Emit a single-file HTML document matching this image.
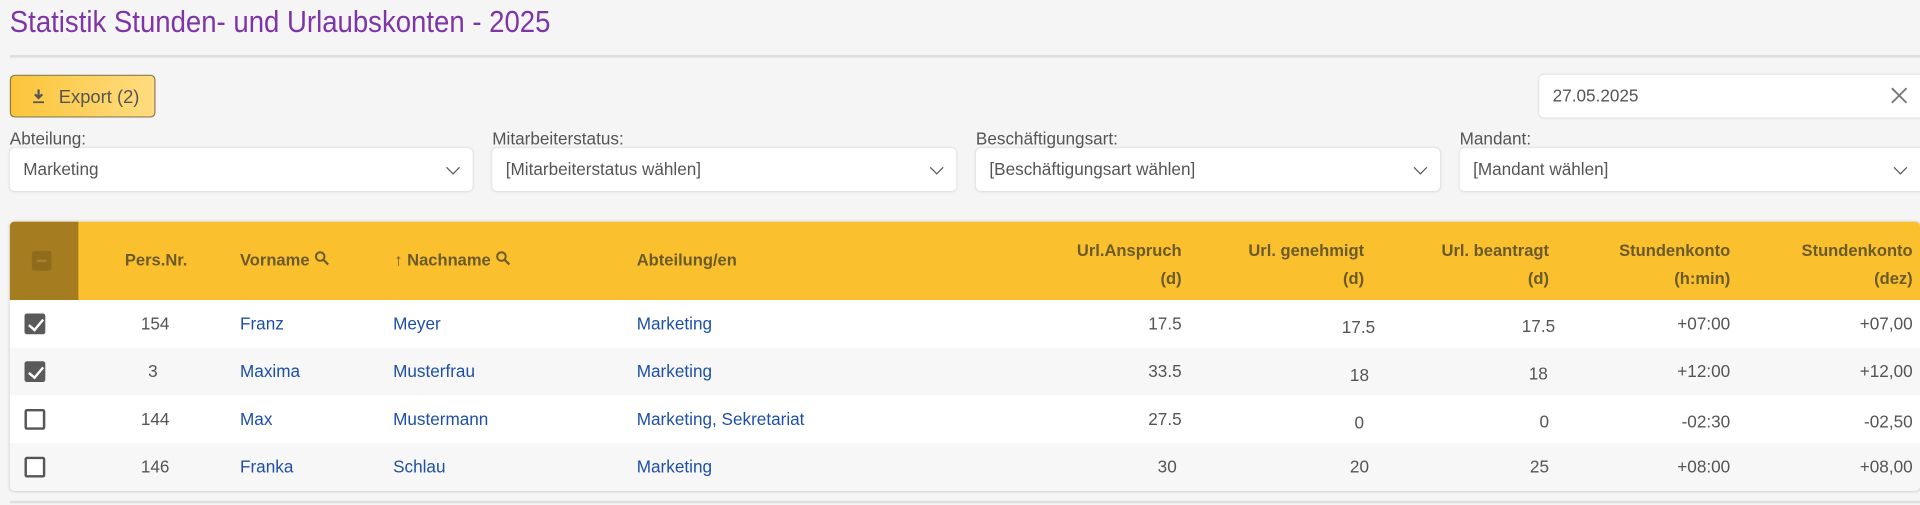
<!DOCTYPE html>
<html><head><meta charset="utf-8"><style>
*{box-sizing:border-box;margin:0;padding:0}
html,body{width:1920px;height:505px;overflow:hidden;background:#f5f5f5}
#w{width:1568px;height:413px;position:relative;transform:scale(1.2245);transform-origin:0 0;font-family:"Liberation Sans Narrow","Liberation Sans",sans-serif;color:#555}
.a{position:absolute;white-space:nowrap}
.title{left:8px;top:4px;font-size:25px;color:#7e35a8;font-family:"Liberation Sans",sans-serif;transform:scaleX(.9);transform-origin:left}
.hr{left:8px;right:0;top:45px;height:2px;background:#dcdcdc}
.btn{left:8px;top:61px;width:119px;height:35px;border:1px solid #8a7a40;border-radius:4px;background:linear-gradient(90deg,#fbc53a,#ffdc80);font-size:15px;color:#555;padding:9px 0 0 39px}
.box{background:#fff;border-radius:4px;box-shadow:0 0 2px rgba(0,0,0,.15);height:35px;font-size:14px;color:#555;padding:9px 0 0 11px}
.lbl{font-size:14px;color:#555}
.chev{position:absolute;right:12px;top:12px;width:8px;height:8px;border-right:1.6px solid #555;border-bottom:1.6px solid #555;transform:rotate(45deg)}
.tbl{left:8px;top:181px;width:1560px;height:220px;background:#fff;border-radius:4px;box-shadow:0 0 2px rgba(0,0,0,.2);overflow:hidden}
.hd{position:absolute;left:0;top:0;width:100%;height:64px;background:#fbc02d}
.hc{position:absolute;left:0;top:0;width:56px;height:64px;background:#a57c1f}
.row{position:absolute;left:0;width:100%;height:39px}
.h{font-size:13.5px;font-weight:bold;color:#6b5a2a}
.c{font-size:14px;color:#555}
.l{font-size:14px;color:#1e4fa8}
.cb{position:absolute;left:12px;width:17px;height:17px;border:2px solid #555;border-radius:2px;background:#fff}
.cb.on{background:#5a5a5a;border-color:#5a5a5a}
.cb.on:after{content:"";position:absolute;left:4px;top:0px;width:5px;height:10px;border-right:2px solid #fff;border-bottom:2px solid #fff;transform:rotate(40deg)}
</style></head><body><div id="w">
<div class="a title">Statistik Stunden- und Urlaubskonten - 2025</div>
<div class="a hr"></div>
<div class="a btn"><svg style="position:absolute;left:17px;top:11px" width="11" height="12" viewBox="0 0 11 12"><path d="M5.5 0v6M2.5 4l3 3 3-3" stroke="#555" stroke-width="1.8" fill="none"/><path d="M1 10.5h9" stroke="#555" stroke-width="1.5"/></svg>Export (2)</div>
<div class="a box" style="left:1257px;top:61px;width:320px">27.05.2025<svg style="position:absolute;left:287px;top:10px" width="14" height="14"><path d="M1 1l12 12M13 1L1 13" stroke="#777" stroke-width="1.5"/></svg></div>
<div class="a lbl" style="left:8px;top:105px">Abteilung:</div>
<div class="a lbl" style="left:402px;top:105px">Mitarbeiterstatus:</div>
<div class="a lbl" style="left:797px;top:105px">Beschäftigungsart:</div>
<div class="a lbl" style="left:1192px;top:105px">Mandant:</div>
<div class="a box" style="left:8px;top:121px;width:378px">Marketing<i class="chev"></i></div>
<div class="a box" style="left:402px;top:121px;width:379px">[Mitarbeiterstatus wählen]<i class="chev"></i></div>
<div class="a box" style="left:797px;top:121px;width:379px">[Beschäftigungsart wählen]<i class="chev"></i></div>
<div class="a box" style="left:1192px;top:121px;width:385px">[Mandant wählen]<i class="chev" style="right:21px"></i></div>
<div class="a tbl">
<div class="hd"></div><div class="hc"><div style="position:absolute;left:18px;top:24px;width:16px;height:16px;background:#8f6c1b;border-radius:2px"><div style="position:absolute;left:4px;top:7px;width:8px;height:2px;background:#a88030"></div></div></div>
<div class="a h" style="left:94px;top:24px">Pers.Nr.</div>
<div class="a h" style="left:188px;top:24px">Vorname <svg width="12" height="12" viewBox="0 0 12 12"><circle cx="4.5" cy="4.5" r="3.5" stroke="#6b5a2a" stroke-width="1.6" fill="none"/><path d="M7 7l4 4" stroke="#6b5a2a" stroke-width="1.8"/></svg></div>
<div class="a h" style="left:314px;top:24px">↑ Nachname <svg width="12" height="12" viewBox="0 0 12 12"><circle cx="4.5" cy="4.5" r="3.5" stroke="#6b5a2a" stroke-width="1.6" fill="none"/><path d="M7 7l4 4" stroke="#6b5a2a" stroke-width="1.8"/></svg></div>
<div class="a h" style="left:512px;top:24px">Abteilung/en</div>
<div class="a h" style="right:603px;top:12px;text-align:right;line-height:23px">Url.Anspruch<br>(d)</div>
<div class="a h" style="right:454px;top:12px;text-align:right;line-height:23px">Url. genehmigt<br>(d)</div>
<div class="a h" style="right:303px;top:12px;text-align:right;line-height:23px">Url. beantragt<br>(d)</div>
<div class="a h" style="right:155px;top:12px;text-align:right;line-height:23px">Stundenkonto<br>(h:min)</div>
<div class="a h" style="right:6px;top:12px;text-align:right;line-height:23px">Stundenkonto<br>(dez)</div>

<div class="row" style="top:64px;background:#fff"><i class="cb on" style="top:11px"></i><span class="a c" style="left:107px;top:11px">154</span><span class="a l" style="left:188px;top:11px">Franz</span><span class="a l" style="left:313px;top:11px">Meyer</span><span class="a l" style="left:512px;top:11px">Marketing</span><span class="a c" style="right:603px;top:11px">17.5</span><span class="a c" style="right:445px;top:14px">17.5</span><span class="a c" style="right:298px;top:13px">17.5</span><span class="a c" style="right:155px;top:11px">+07:00</span><span class="a c" style="right:6px;top:11px">+07,00</span></div>
<div class="row" style="top:103px;background:#f7f7f7"><i class="cb on" style="top:11px"></i><span class="a c" style="left:113px;top:11px">3</span><span class="a l" style="left:188px;top:11px">Maxima</span><span class="a l" style="left:313px;top:11px">Musterfrau</span><span class="a l" style="left:512px;top:11px">Marketing</span><span class="a c" style="right:603px;top:11px">33.5</span><span class="a c" style="right:450px;top:14px">18</span><span class="a c" style="right:304px;top:13px">18</span><span class="a c" style="right:155px;top:11px">+12:00</span><span class="a c" style="right:6px;top:11px">+12,00</span></div>
<div class="row" style="top:142px;background:#fff"><i class="cb" style="top:11px"></i><span class="a c" style="left:107px;top:11px">144</span><span class="a l" style="left:188px;top:11px">Max</span><span class="a l" style="left:313px;top:11px">Mustermann</span><span class="a l" style="left:512px;top:11px">Marketing, Sekretariat</span><span class="a c" style="right:603px;top:11px">27.5</span><span class="a c" style="right:454px;top:14px">0</span><span class="a c" style="right:303px;top:13px">0</span><span class="a c" style="right:155px;top:13px">-02:30</span><span class="a c" style="right:6px;top:13px">-02,50</span></div>
<div class="row" style="top:181px;background:#f7f7f7"><i class="cb" style="top:11px"></i><span class="a c" style="left:107px;top:11px">146</span><span class="a l" style="left:188px;top:11px">Franka</span><span class="a l" style="left:313px;top:11px">Schlau</span><span class="a l" style="left:512px;top:11px">Marketing</span><span class="a c" style="right:607px;top:11px">30</span><span class="a c" style="right:450px;top:11px">20</span><span class="a c" style="right:303px;top:11px">25</span><span class="a c" style="right:155px;top:11px">+08:00</span><span class="a c" style="right:6px;top:11px">+08,00</span></div>
</div>
<div class="a" style="left:8px;right:0;top:409px;height:2px;background:#e0e0e0"></div>
</div></body></html>
